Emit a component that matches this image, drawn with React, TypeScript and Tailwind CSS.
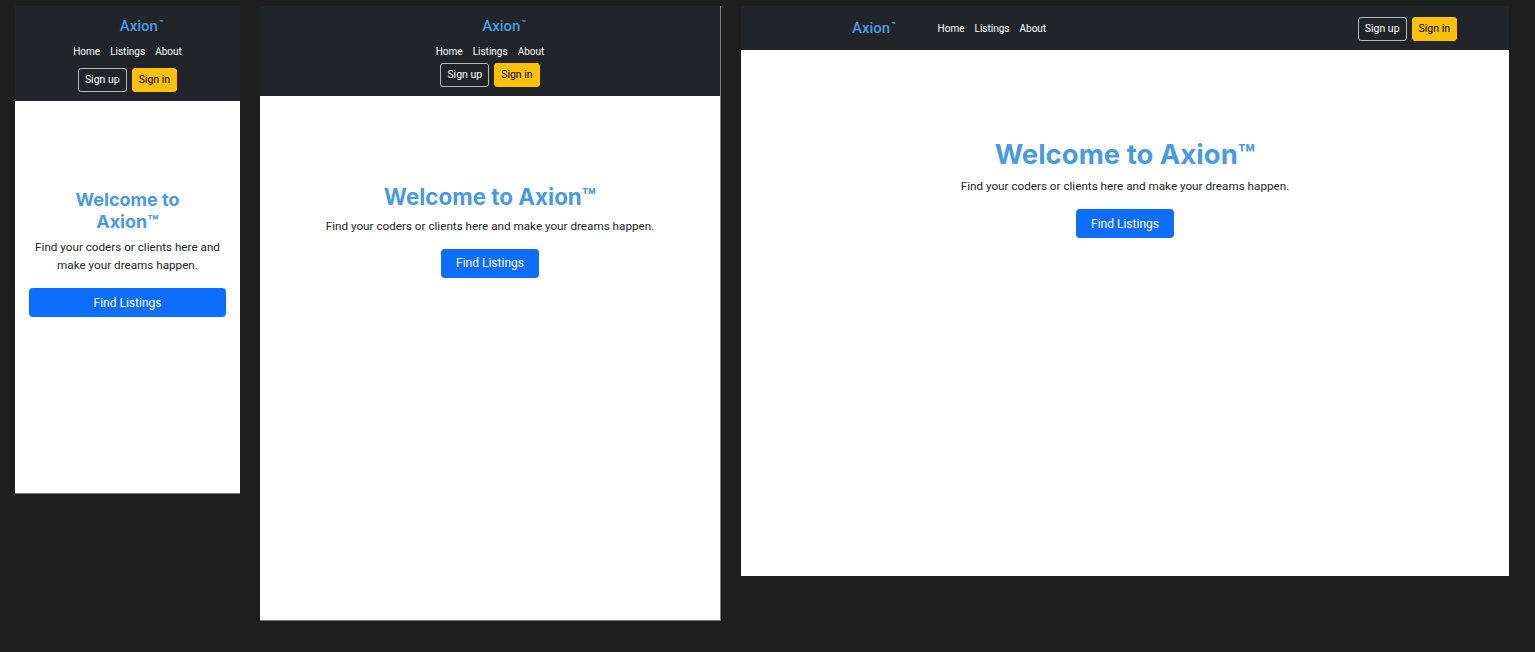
import React from "react";

const font = { fontFamily: "Roboto, 'Noto Sans', sans-serif" };
const headFont = { fontFamily: "Inter, Roboto, sans-serif" };

function Brand() {
  return (
    <div className="flex items-start text-[15px] leading-[22px] text-[#4a9ae0] font-medium">
      <span>Axion</span>
      <span className="text-[7px] leading-[10px] mt-[3px] ml-[1px] font-bold">™</span>
    </div>
  );
}

function Links() {
  return (
    <div className="flex gap-[10px] text-[10px] leading-[16px] text-white">
      <span>Home</span>
      <span>Listings</span>
      <span>About</span>
    </div>
  );
}

function Buttons() {
  return (
    <div className="flex gap-[5px] text-[10.5px]">
      <button className="h-[24px] px-[6px] rounded-[3px] border border-[#b8b8b8] text-white">
        Sign up
      </button>
      <button className="h-[24px] px-[6px] rounded-[3px] border border-[#ffc107] bg-[#ffc107] text-black">
        Sign in
      </button>
    </div>
  );
}

function Hero({ size, narrow }: { size: string; narrow?: boolean }) {
  return (
    <div className="flex flex-col items-center text-center pt-[88px] px-[14px]">
      <h1
        style={headFont}
        className={`${size} leading-[1.2] font-bold text-[#4a9ae0] mb-[6px] ${
          narrow ? "max-w-[140px]" : ""
        }`}
      >
        Welcome to Axion™
      </h1>
      <p className="text-[11.7px] leading-[18px] text-[#212529] mb-[14px]">
        Find your coders or clients here and make your dreams happen.
      </p>
      <button
        className={`h-[29px] px-[15px] rounded-[4px] bg-[#0d6efd] text-white text-[12px] ${
          narrow ? "w-full" : ""
        }`}
      >
        Find Listings
      </button>
    </div>
  );
}

export default function App() {
  return (
    <div
      className="w-full h-[652px] bg-[#1e1e1e] flex items-start gap-[20px] pl-[15px] pt-[6px] overflow-hidden"
      style={font}
    >
      {/* Frame 1: mobile */}
      <div className="w-[225px] h-[488px] bg-white border-b border-[#7a7a7a] flex flex-col shrink-0">
        <div className="h-[95px] bg-[#212529] flex flex-col items-center pt-[9px]">
          <div className="ml-[28px]">
            <Brand />
          </div>
          <div className="mt-[7px]">
            <Links />
          </div>
          <div className="mt-[8px]">
            <Buttons />
          </div>
        </div>
        <Hero size="text-[18px]" narrow />
      </div>

      {/* Frame 2: tablet */}
      <div className="w-[461px] h-[615px] bg-white border-b border-r border-[#7a7a7a] flex flex-col shrink-0">
        <div className="h-[90px] bg-[#212529] flex flex-col items-center pt-[9px]">
          <div className="ml-[28px]">
            <Brand />
          </div>
          <div className="mt-[7px]">
            <Links />
          </div>
          <div className="mt-[3px]">
            <Buttons />
          </div>
        </div>
        <Hero size="text-[22.4px]" />
      </div>

      {/* Frame 3: desktop */}
      <div className="w-[768px] h-[570px] bg-white flex flex-col shrink-0">
        <div className="h-[44px] bg-[#212529] flex items-center pl-[111px] pr-[52px]">
          <Brand />
          <div className="ml-[42px] mt-[1px]">
            <Links />
          </div>
          <div className="ml-auto mt-[1px]">
            <Buttons />
          </div>
        </div>
        <Hero size="text-[27.5px]" />
      </div>
    </div>
  );
}
